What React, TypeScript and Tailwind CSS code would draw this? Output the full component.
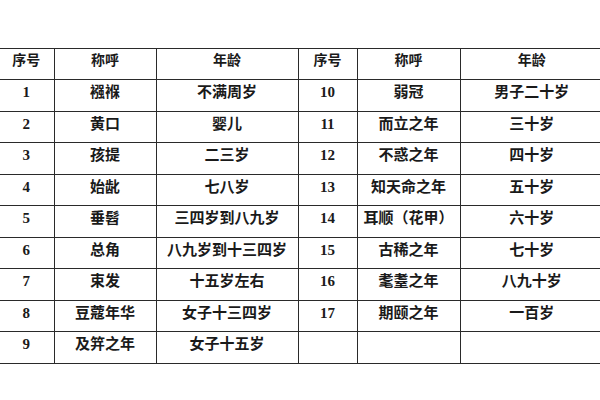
import React from 'react';

const rows: [string, string, string, string, string, string][] = [
  ['1', '襁褓', '不满周岁', '10', '弱冠', '男子二十岁'],
  ['2', '黄口', '婴儿', '11', '而立之年', '三十岁'],
  ['3', '孩提', '二三岁', '12', '不惑之年', '四十岁'],
  ['4', '始龀', '七八岁', '13', '知天命之年', '五十岁'],
  ['5', '垂髫', '三四岁到八九岁', '14', '耳顺（花甲）', '六十岁'],
  ['6', '总角', '八九岁到十三四岁', '15', '古稀之年', '七十岁'],
  ['7', '束发', '十五岁左右', '16', '耄耋之年', '八九十岁'],
  ['8', '豆蔻年华', '女子十三四岁', '17', '期颐之年', '一百岁'],
  ['9', '及笄之年', '女子十五岁', '', '', ''],
];

const cell = 'border-[1.5px] border-[#2a2a2a] text-center align-top pt-[2px] leading-[20px]';

export default function App() {
  return (
    <div className="w-[600px] h-[400px] bg-white overflow-hidden pt-[48px]">
      <table
        className="table-fixed border-collapse w-[604px] -ml-[1px] text-[15px] font-bold text-[#1a1a1a]"
        style={{ fontFamily: '"Liberation Serif", "Noto Sans CJK SC", serif' }}
      >
        <colgroup>
          <col className="w-[55px]" />
          <col className="w-[102px]" />
          <col className="w-[142px]" />
          <col className="w-[59px]" />
          <col className="w-[103px]" />
          <col className="w-[143px]" />
        </colgroup>
        <thead>
          <tr className="h-[31px]">
            <th className={`${cell} border-l-0 text-[14px]`}>序号</th>
            <th className={`${cell} text-[14px]`}>称呼</th>
            <th className={`${cell} text-[14px]`}>年龄</th>
            <th className={`${cell} text-[14px]`}>序号</th>
            <th className={`${cell} text-[14px]`}>称呼</th>
            <th className={`${cell} border-r-0 text-[14px]`}>年龄</th>
          </tr>
        </thead>
        <tbody>
          {rows.map(r => (
            <tr key={r[0]} className="h-[31.5px]">
              <td className={`${cell} border-l-0`}>{r[0]}</td>
              <td className={cell}>{r[1]}</td>
              <td className={cell}>{r[2]}</td>
              <td className={cell}>{r[3]}</td>
              <td className={cell}>{r[4]}</td>
              <td className={`${cell} border-r-0`}>{r[5]}</td>
            </tr>
          ))}
        </tbody>
      </table>
    </div>
  );
}
